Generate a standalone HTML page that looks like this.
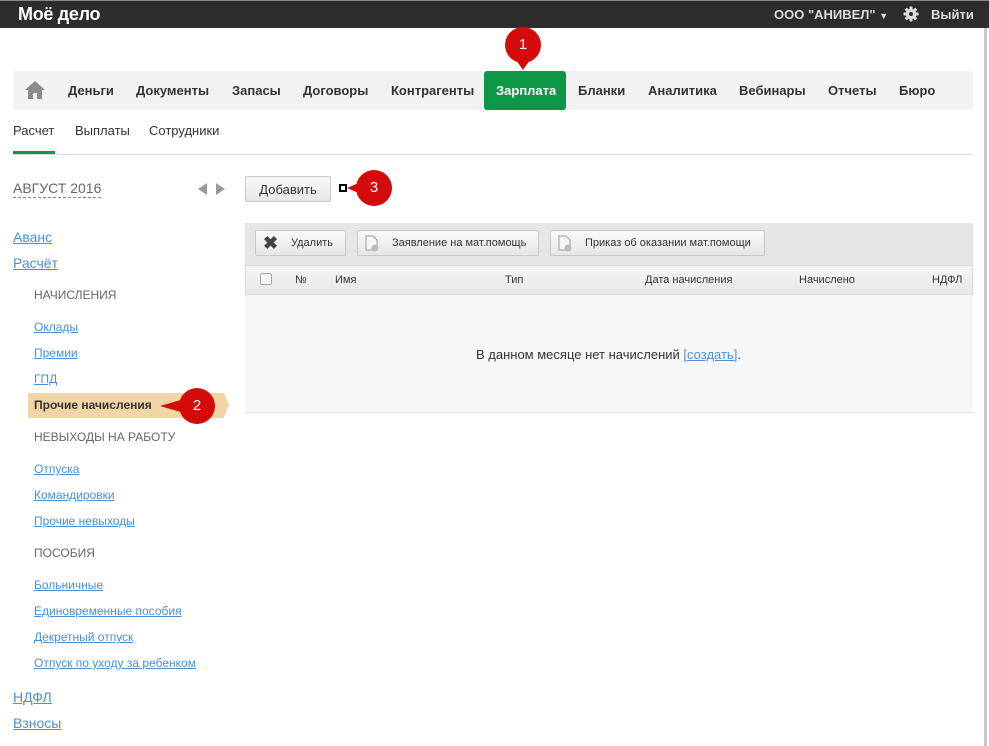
<!DOCTYPE html>
<html><head><meta charset="utf-8"><style>
*{margin:0;padding:0;box-sizing:border-box}
body{width:989px;height:746px;overflow:hidden;background:#fff;font-family:"Liberation Sans",Arial,sans-serif;position:relative;color:#333}
.a{position:absolute;white-space:nowrap}
.top{position:absolute;left:0;top:0;width:989px;height:28px;background:#2d2d2d;border-top:1px solid #888}
.nav{position:absolute;left:13px;top:71px;width:960px;height:39px;background:#f2f2f2;border-radius:3px}
.ni{position:absolute;top:83px;font-size:13px;font-weight:bold;color:#333}
.lnk{color:#4a8fd6;text-decoration:underline}
.s1{font-size:14px}
.s2{font-size:12px}
.cap{font-size:12px;color:#666}
.btn{position:absolute;height:26px;border:1px solid #c8c8c8;border-radius:2px;background:linear-gradient(#fafafa,#e6e6e6);font-size:11px;color:#333;line-height:24px}
.bub{position:absolute;width:36px;height:36px;border-radius:50%;background:#d40b0b;color:#fff;font-size:15px;text-align:center;line-height:36px}
</style></head><body>
<div class="top"></div>
<div class="a" style="left:18px;top:4px;font-size:18px;font-weight:bold;color:#fff;letter-spacing:-0.3px">Моё дело</div>
<div class="a" style="left:774px;top:7px;font-size:13px;font-weight:bold;color:#ddd">ООО "АНИВЕЛ" <span style="font-size:9px">▼</span></div>
<svg class="a" style="left:903px;top:6px" width="16" height="16" viewBox="0 0 16 16"><g fill="#ddd"><rect x="6.5" y="0.5" width="3" height="15" rx="0.5"/><rect x="6.5" y="0.5" width="3" height="15" rx="0.5" transform="rotate(45 8 8)"/><rect x="6.5" y="0.5" width="3" height="15" rx="0.5" transform="rotate(90 8 8)"/><rect x="6.5" y="0.5" width="3" height="15" rx="0.5" transform="rotate(135 8 8)"/><circle cx="8" cy="8" r="5.2"/></g><circle cx="8" cy="8" r="2" fill="#2d2d2d"/></svg>
<div class="a" style="left:931px;top:7px;font-size:13px;font-weight:bold;color:#ddd">Выйти</div>
<div class="a" style="left:984px;top:28px;width:3px;height:718px;background:#c8c8c8"></div>

<div class="nav"></div>
<svg class="a" style="left:24px;top:80px" width="22" height="20" viewBox="0 0 22 20"><path d="M11 1L1 10h3v9h5v-6h4v6h5v-9h3z" fill="#8a8a8a"/></svg>
<div class="ni" style="left:68px">Деньги</div>
<div class="ni" style="left:136px">Документы</div>
<div class="ni" style="left:232px">Запасы</div>
<div class="ni" style="left:303px">Договоры</div>
<div class="ni" style="left:391px">Контрагенты</div>
<div class="a" style="left:484px;top:71px;width:82px;height:39px;background:#0e9647;border-radius:3px"></div>
<div class="ni" style="left:496px;color:#fff">Зарплата</div>
<div class="ni" style="left:578px">Бланки</div>
<div class="ni" style="left:648px">Аналитика</div>
<div class="ni" style="left:739px">Вебинары</div>
<div class="ni" style="left:828px">Отчеты</div>
<div class="ni" style="left:899px">Бюро</div>
<div class="a" style="left:509px;top:50px;width:0;height:0;border-left:14px solid transparent;border-right:14px solid transparent;border-top:20px solid #d40b0b"></div>
<div class="bub" style="left:505px;top:27px">1</div>

<div class="a" style="left:13px;top:123px;font-size:13px">Расчет</div>
<div class="a" style="left:75px;top:123px;font-size:13px">Выплаты</div>
<div class="a" style="left:149px;top:123px;font-size:13px">Сотрудники</div>
<div class="a" style="left:13px;top:154px;width:960px;height:1px;background:#ddd"></div>
<div class="a" style="left:13px;top:151px;width:42px;height:3px;background:#0e9647"></div>

<div class="a" style="left:13px;top:180px;font-size:14px;color:#666;border-bottom:1px dashed #888;padding-bottom:1px">АВГУСТ 2016</div>
<div class="a" style="left:198px;top:183px;width:0;height:0;border-top:6px solid transparent;border-bottom:6px solid transparent;border-right:9px solid #999"></div>
<div class="a" style="left:216px;top:183px;width:0;height:0;border-top:6px solid transparent;border-bottom:6px solid transparent;border-left:9px solid #999"></div>

<div class="btn" style="left:245px;top:176px;width:86px;font-size:13px;text-align:center;line-height:26px">Добавить</div>
<div class="a" style="left:339px;top:184px;width:8px;height:8px;border:2px solid #000;background:#fff"></div>
<div class="a" style="left:347px;top:181px;width:0;height:0;border-top:7px solid transparent;border-bottom:7px solid transparent;border-right:16px solid #d40b0b"></div>
<div class="bub" style="left:356px;top:170px">3</div>

<div class="a" style="left:245px;top:223px;width:728px;height:42px;background:#e6e6e6"></div>
<div class="btn" style="left:255px;top:230px;width:91px"><span style="position:absolute;left:7px;top:0;font-size:18px;font-weight:bold;color:#444">✖</span><span style="position:absolute;left:35px">Удалить</span></div>
<div class="btn" style="left:357px;top:230px;width:182px"><svg style="position:absolute;left:6px;top:4px" width="16" height="17" viewBox="0 0 16 17"><path d="M2 1h7l4 4v10H2z" fill="#f6f6f6" stroke="#999"/><circle cx="11" cy="13" r="3.5" fill="#bbb"/></svg><span style="position:absolute;left:34px">Заявление на мат.помощь</span></div>
<div class="btn" style="left:550px;top:230px;width:215px"><svg style="position:absolute;left:6px;top:4px" width="16" height="17" viewBox="0 0 16 17"><path d="M2 1h7l4 4v10H2z" fill="#f6f6f6" stroke="#999"/><circle cx="11" cy="13" r="3.5" fill="#bbb"/></svg><span style="position:absolute;left:34px">Приказ об оказании мат.помощи</span></div>

<div class="a" style="left:245px;top:265px;width:728px;height:30px;background:linear-gradient(#f6f6f6,#e8e8e8);border:1px solid #d8d8d8"></div>
<div class="a" style="left:260px;top:273px;width:12px;height:12px;border:1px solid #aaa;border-radius:2px;background:#f4f4f4"></div>
<div class="a" style="left:295px;top:274px;font-size:11px">№</div>
<div class="a" style="left:335px;top:274px;font-size:11px">Имя</div>
<div class="a" style="left:505px;top:274px;font-size:11px">Тип</div>
<div class="a" style="left:645px;top:274px;font-size:11px">Дата начисления</div>
<div class="a" style="left:799px;top:274px;font-size:11px">Начислено</div>
<div class="a" style="left:932px;top:274px;font-size:11px">НДФЛ</div>
<div class="a" style="left:245px;top:295px;width:728px;height:118px;background:#f7f7f7;border-bottom:1px solid #ddd"></div>
<div class="a" style="left:476px;top:347px;font-size:13px">В данном месяце нет начислений <span class="lnk">[создать]</span>.</div>

<div class="a lnk s1" style="left:13px;top:229px">Аванс</div>
<div class="a lnk s1" style="left:13px;top:255px">Расчёт</div>
<div class="a cap" style="left:34px;top:288px">НАЧИСЛЕНИЯ</div>
<div class="a lnk s2" style="left:34px;top:320px">Оклады</div>
<div class="a lnk s2" style="left:34px;top:346px">Премии</div>
<div class="a lnk s2" style="left:34px;top:372px">ГПД</div>
<div class="a" style="left:28px;top:393px;width:196px;height:25px;background:#f2d5a6"></div>
<div class="a" style="left:224px;top:393px;width:0;height:0;border-top:12.5px solid transparent;border-bottom:12.5px solid transparent;border-left:5px solid #f2d5a6"></div>
<div class="a" style="left:34px;top:398px;font-size:12px;font-weight:bold;color:#333">Прочие начисления</div>
<div class="a" style="left:160px;top:399px;width:0;height:0;border-top:7px solid transparent;border-bottom:7px solid transparent;border-right:24px solid #d40b0b"></div>
<div class="bub" style="left:179px;top:388px">2</div>
<div class="a cap" style="left:34px;top:430px">НЕВЫХОДЫ НА РАБОТУ</div>
<div class="a lnk s2" style="left:34px;top:462px">Отпуска</div>
<div class="a lnk s2" style="left:34px;top:488px">Командировки</div>
<div class="a lnk s2" style="left:34px;top:514px">Прочие невыходы</div>
<div class="a cap" style="left:34px;top:546px">ПОСОБИЯ</div>
<div class="a lnk s2" style="left:34px;top:578px">Больничные</div>
<div class="a lnk s2" style="left:34px;top:604px">Единовременные пособия</div>
<div class="a lnk s2" style="left:34px;top:630px">Декретный отпуск</div>
<div class="a lnk s2" style="left:34px;top:656px">Отпуск по уходу за ребенком</div>
<div class="a lnk s1" style="left:13px;top:689px">НДФЛ</div>
<div class="a lnk s1" style="left:13px;top:715px">Взносы</div>
</body></html>
